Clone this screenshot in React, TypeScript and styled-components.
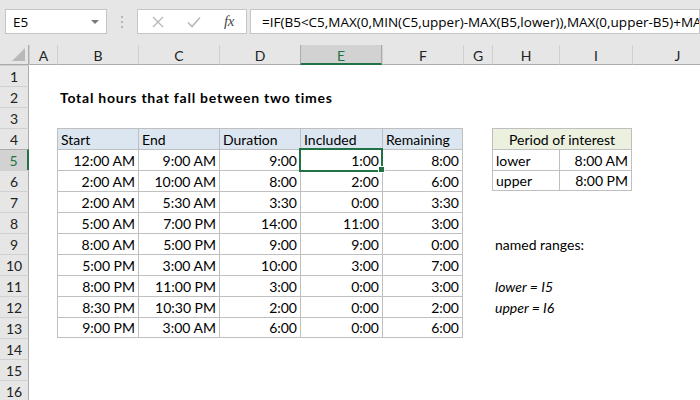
import React from "react";
import styled, { createGlobalStyle, css } from "styled-components";

const GlobalStyle = createGlobalStyle`
  html, body {
    margin: 0;
    padding: 0;
    background: #ffffff;
  }
  body {
    font-family: Lato, "Liberation Sans", sans-serif;
    color: #000;
  }
`;

const GREEN = "#217346";
const LINE = "#bfbfbf";

const LETTERS = ["A", "B", "C", "D", "E", "F", "G", "H", "I", "J"];
const COL_WIDTHS = [29, 28, 81, 81, 81, 82, 81, 29, 67, 73, 90];
const ROW_COUNT = 16;

type Align = "left" | "right" | "center";

type CellSpec = {
  text?: string;
  align?: Align;
  bold?: boolean;
  italic?: boolean;
  fill?: string;
  boxed?: boolean;
  edgeRight?: boolean;
  edgeBottom?: boolean;
  span?: number;
};

const tableRows = [
  ["12:00 AM", "9:00 AM", "9:00", "1:00", "8:00"],
  ["2:00 AM", "10:00 AM", "8:00", "2:00", "6:00"],
  ["2:00 AM", "5:30 AM", "3:30", "0:00", "3:30"],
  ["5:00 AM", "7:00 PM", "14:00", "11:00", "3:00"],
  ["8:00 AM", "5:00 PM", "9:00", "9:00", "0:00"],
  ["5:00 PM", "3:00 AM", "10:00", "3:00", "7:00"],
  ["8:00 PM", "11:00 PM", "3:00", "0:00", "3:00"],
  ["8:30 PM", "10:30 PM", "2:00", "0:00", "2:00"],
  ["9:00 PM", "3:00 AM", "6:00", "0:00", "6:00"],
];

const buildCells = () => {
  const cells: Record<string, CellSpec> = {};
  cells["B2"] = { text: "Total hours that fall between two times", bold: true };

  ["Start", "End", "Duration", "Included", "Remaining"].forEach((h, i) => {
    const col = LETTERS[1 + i];
    cells[`${col}4`] = { text: h, fill: "#dce6f1", boxed: true, edgeRight: i === 4 };
  });
  tableRows.forEach((row, r) => {
    row.forEach((v, i) => {
      const col = LETTERS[1 + i];
      cells[`${col}${5 + r}`] = {
        text: v,
        align: "right",
        boxed: true,
        edgeRight: i === 4,
        edgeBottom: r === tableRows.length - 1,
      };
    });
  });

  cells["H4"] = {
    text: "Period of interest",
    align: "center",
    fill: "#ebf1de",
    boxed: true,
    edgeRight: true,
    span: 2,
  };
  cells["H5"] = { text: "lower", boxed: true };
  cells["I5"] = { text: "8:00 AM", align: "right", boxed: true, edgeRight: true };
  cells["H6"] = { text: "upper", boxed: true, edgeBottom: true };
  cells["I6"] = { text: "8:00 PM", align: "right", boxed: true, edgeRight: true, edgeBottom: true };

  cells["H9"] = { text: "named ranges:" };
  cells["H11"] = { text: "lower = I5", italic: true };
  cells["H12"] = { text: "upper = I6", italic: true };
  return cells;
};

const CELLS = buildCells();

export default function App() {
  const rows = Array.from({ length: ROW_COUNT }, (_, i) => i + 1);

  return (
    <Window>
      <GlobalStyle />
      <Toolbar>
        <NameBox>
          <span>E5</span>
          <DropArrow />
        </NameBox>
        <Grip>
          <Dot />
          <Dot />
          <Dot />
        </Grip>
        <FxBox>
          <svg width="12" height="12" viewBox="0 0 12 12">
            <path d="M1 1 L11 11 M11 1 L1 11" stroke="#b8b8b8" strokeWidth="1.4" fill="none" />
          </svg>
          <svg width="14" height="12" viewBox="0 0 14 12">
            <path d="M1 6.5 L5 10.5 L13 1.5" stroke="#b8b8b8" strokeWidth="1.6" fill="none" />
          </svg>
          <FxLabel>fx</FxLabel>
        </FxBox>
        <FormulaInput>
          =IF(B5&lt;C5,MAX(0,MIN(C5,upper)-MAX(B5,lower)),MAX(0,upper-B5)+MAX(0,C5-lower))
        </FormulaInput>
      </Toolbar>

      <Sheet $cols={COL_WIDTHS}>
        <Corner>
          <CornerTriangle />
        </Corner>
        {LETTERS.map((l) => (
          <ColHeader key={l} $active={l === "E"}>
            {l}
          </ColHeader>
        ))}

        {rows.map((r) => (
          <React.Fragment key={r}>
            <RowHeader $active={r === 5}>{r}</RowHeader>
            {LETTERS.map((l) => {
              if (r === 4 && l === "I") return null;
              const spec = CELLS[`${l}${r}`];
              if (!spec) return <Cell key={l} />;
              return (
                <Cell
                  key={l}
                  $align={spec.align || "left"}
                  $bold={spec.bold}
                  $italic={spec.italic}
                  $fill={spec.fill}
                  $boxed={spec.boxed}
                  $edgeRight={spec.edgeRight}
                  $edgeBottom={spec.edgeBottom}
                  $span={spec.span}
                >
                  {spec.text}
                </Cell>
              );
            })}
          </React.Fragment>
        ))}

        <Selection />
        <FillHandle />
      </Sheet>
    </Window>
  );
}

const Window = styled.div`
  width: 700px;
  height: 400px;
  overflow: hidden;
  background: #e6e6e6;
`;

const Toolbar = styled.div`
  display: flex;
  align-items: center;
  height: 45px;
  padding: 0 0 2px 5px;
  box-sizing: border-box;
  font-family: "Open Sans", "Liberation Sans", sans-serif;
  font-size: 13.5px;
  color: #000;
`;

const BoxBase = css`
  height: 25px;
  box-sizing: border-box;
  background: #ffffff;
  border: 1px solid #c6c6c6;
  display: flex;
  align-items: center;
`;

const NameBox = styled.div`
  ${BoxBase};
  width: 102px;
  padding: 0 7px 0 7px;
  justify-content: space-between;
`;

const DropArrow = styled.span`
  width: 0;
  height: 0;
  border-left: 4px solid transparent;
  border-right: 4px solid transparent;
  border-top: 4px solid #7a7a7a;
`;

const Grip = styled.div`
  width: 30px;
  display: flex;
  flex-direction: column;
  align-items: center;
  gap: 3px;
`;

const Dot = styled.span`
  width: 2px;
  height: 2px;
  background: #b5b5b5;
`;

const FxBox = styled.div`
  ${BoxBase};
  width: 110px;
  padding-left: 14px;
  gap: 23px;
`;

const FxLabel = styled.span`
  font-family: "Liberation Serif", serif;
  font-style: italic;
  font-size: 15px;
  color: #4a4a4a;
  letter-spacing: -0.5px;
`;

const FormulaInput = styled.div`
  ${BoxBase};
  margin-left: 3px;
  flex: 1;
  padding-left: 11px;
  white-space: nowrap;
  overflow: hidden;
`;

const Sheet = styled.div<{ $cols: number[] }>`
  position: relative;
  display: grid;
  grid-template-columns: ${({ $cols }) => $cols.map((c) => `${c}px`).join(" ")};
  grid-template-rows: 20px repeat(${ROW_COUNT}, 21px);
  background: #ffffff;
  font-size: 14px;
`;

const HeaderBase = css`
  box-sizing: border-box;
  background: #e6e6e6;
  display: flex;
  align-items: center;
  justify-content: center;
  color: #222;
  font-size: 14px;
`;

const Corner = styled.div`
  ${HeaderBase};
  position: relative;
  border-bottom: 1px solid #ababab;
  border-right: 1px solid #ababab;
`;

const CornerTriangle = styled.span`
  position: absolute;
  right: 3px;
  bottom: 3px;
  width: 0;
  height: 0;
  border-left: 13px solid transparent;
  border-bottom: 13px solid #b9b9b9;
`;

const ColHeader = styled.div<{ $active?: boolean }>`
  ${HeaderBase};
  padding-top: 2px;
  border-left: 1px solid #d0d0d0;
  border-bottom: 1px solid #ababab;
  ${({ $active }) =>
    $active &&
    css`
      background: #d2d2d2;
      color: ${GREEN};
      border-left-color: #ababab;
      border-right: 1px solid #ababab;
      border-bottom: 2px solid ${GREEN};
    `}
`;

const RowHeader = styled.div<{ $active?: boolean }>`
  ${HeaderBase};
  align-items: flex-end;
  padding-bottom: 1px;
  line-height: 17px;
  border-top: 1px solid #d0d0d0;
  border-right: 1px solid #ababab;
  ${({ $active }) =>
    $active &&
    css`
      background: #d2d2d2;
      color: ${GREEN};
      border-right: 2px solid ${GREEN};
      border-top-color: #ababab;
    `}
`;

const Cell = styled.div<{
  $align?: Align;
  $bold?: boolean;
  $italic?: boolean;
  $fill?: string;
  $boxed?: boolean;
  $edgeRight?: boolean;
  $edgeBottom?: boolean;
  $span?: number;
}>`
  box-sizing: border-box;
  display: flex;
  align-items: flex-end;
  justify-content: ${({ $align }) =>
    $align === "right" ? "flex-end" : $align === "center" ? "center" : "flex-start"};
  padding: 0 3px 1px 3px;
  line-height: 17px;
  white-space: nowrap;
  overflow: visible;
  font-weight: ${({ $bold }) => ($bold ? 700 : 400)};
  font-style: ${({ $italic }) => ($italic ? "italic" : "normal")};
  letter-spacing: ${({ $bold }) => ($bold ? "0.75px" : "normal")};
  background: ${({ $fill }) => $fill || "transparent"};
  ${({ $span }) => $span && `grid-column: span ${$span};`}
  ${({ $boxed }) =>
    $boxed &&
    css`
      border-left: 1px solid ${LINE};
      border-top: 1px solid ${LINE};
    `}
  ${({ $edgeRight }) => $edgeRight && `border-right: 1px solid ${LINE};`}
  ${({ $edgeBottom }) => $edgeBottom && `border-bottom: 1px solid ${LINE};`}
`;

const Selection = styled.div`
  position: absolute;
  left: 299px;
  top: 103px;
  width: 84px;
  height: 24px;
  box-sizing: border-box;
  border: 2px solid ${GREEN};
  pointer-events: none;
`;

const FillHandle = styled.div`
  position: absolute;
  left: 378px;
  top: 121px;
  width: 7px;
  height: 7px;
  box-sizing: border-box;
  background: ${GREEN};
  border: 1px solid #ffffff;
`;
